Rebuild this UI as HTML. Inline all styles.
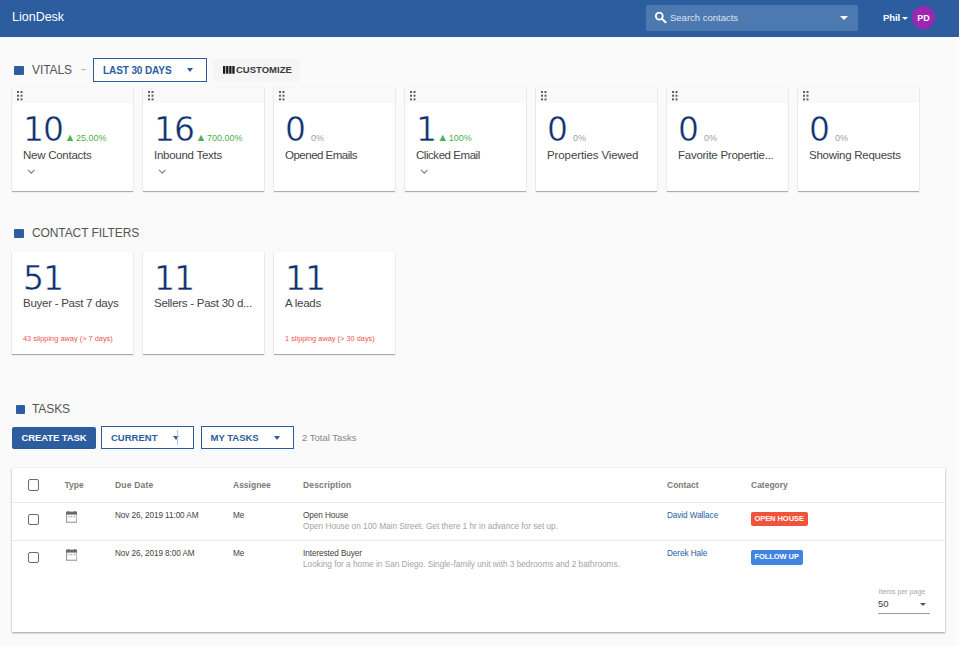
<!DOCTYPE html>
<html lang="en">
<head>
<meta charset="utf-8">
<title>LionDesk</title>
<style>
*{box-sizing:border-box;margin:0;padding:0}
html,body{width:960px;height:646px;overflow:hidden}
body{background:#fafafa;font-family:"Liberation Sans",sans-serif;color:#444;position:relative}
.abs{position:absolute}
#hdr{position:absolute;left:0;top:0;width:959px;height:37px;background:#2b5d9f}
#brand{position:absolute;left:12px;top:9px;font-size:12.5px;color:#fff;line-height:16px}
#search{position:absolute;left:646px;top:5px;width:212px;height:26px;background:#4d79b1;border-radius:2px}
#search .ph{position:absolute;left:24px;top:5.5px;font-size:9.5px;line-height:14px;color:#dbe5f1}
#user{position:absolute;left:883px;top:12px;font-size:9.5px;letter-spacing:-0.1px;font-weight:bold;color:#fff;line-height:12px}
#avatar{position:absolute;left:912px;top:6px;width:23px;height:23px;border-radius:50%;background:#9c27b0;color:#fff;font-size:9px;font-weight:bold;text-align:center;line-height:24px}
.sq{position:absolute;left:14px;width:9.5px;height:9.5px;background:#2b5d9f;border-radius:1px}
.h{position:absolute;left:32px;font-size:12px;line-height:16px;color:#555;letter-spacing:-0.1px}
.card{position:absolute;width:121px;height:104px;background:#fff;box-shadow:0 1px 1px rgba(0,0,0,.3),0 0 1px rgba(0,0,0,.09)}
.fc{height:102px}
.card .strip{position:absolute;left:0;top:0;width:100%;height:15.5px;background:#f9f9f9}
.card .num{position:absolute;left:11px;font-family:"DejaVu Sans",sans-serif;font-size:33px;line-height:36px;color:#10306e;letter-spacing:-1px;-webkit-text-stroke:0.5px #fff}
.card .lbl{position:absolute;left:11px;font-size:11.5px;line-height:14px;color:#444;white-space:nowrap;letter-spacing:-0.26px}
.card .pct{position:absolute;font-size:9px;line-height:10px;white-space:nowrap}
.tri{font-size:10.5px;line-height:0;margin-right:0.8px}
.g{color:#4caf50}.z{color:#9e9e9e}
.slip{position:absolute;left:11px;font-size:7.4px;line-height:9px;color:#ef5350;white-space:nowrap}
.btn{position:absolute;height:24px;font-size:10px;font-weight:bold;line-height:22px;white-space:nowrap}
.ol{border:1px solid #2b5d9f;color:#2b5d9f;background:#fff;padding-left:9px}
.car{position:absolute;width:0;height:0;border-left:3.5px solid transparent;border-right:3.5px solid transparent;border-top:4px solid #2b5d9f}
#tbl{position:absolute;left:12px;top:468px;width:932.6px;height:164px;background:#fff;box-shadow:0 1px 2px rgba(0,0,0,.36),0 0 1px rgba(0,0,0,.12)}
.th{position:absolute;font-size:8.5px;font-weight:bold;color:#7a7a7a;line-height:12px;white-space:nowrap}
.td{position:absolute;font-size:8.2px;color:#424242;line-height:10px;white-space:nowrap;letter-spacing:-0.07px}
.sub{color:#a4a4a4;font-size:8.25px;letter-spacing:0}
.lnk{color:#2b5d9f}
.cb{position:absolute;left:16.2px;width:11.2px;height:11.2px;border:1.3px solid #6b6b6b;border-radius:2px;background:#fff}
.hr{position:absolute;left:0;width:933px;height:1px;background:#eaeaea}
.tag{position:absolute;height:14.5px;border-radius:2px;color:#fff;font-size:7.5px;font-weight:bold;line-height:14.5px;padding:0 3.6px;white-space:nowrap;letter-spacing:-0.05px}
</style>
</head>
<body>
<div id="hdr">
  <div id="brand">LionDesk</div>
  <div id="search">
    <svg class="abs" style="left:9px;top:7px" width="12" height="12" viewBox="0 0 12 12"><circle cx="4.3" cy="4.1" r="3.45" fill="none" stroke="#fff" stroke-width="1.8"/><path d="M6.9 6.8 L10.6 10.3" stroke="#fff" stroke-width="2" stroke-linecap="round"/></svg>
    <div class="ph">Search contacts</div>
    <div class="car" style="left:194px;top:11px;border-top-color:#fff;border-left-width:4px;border-right-width:4px"></div>
  </div>
  <div id="user">Phil</div>
  <div class="car" style="left:902px;top:17px;border-top-color:#fff;border-left-width:3px;border-right-width:3px;border-top-width:3px"></div>
  <div id="avatar">PD</div>
</div>

<!-- VITALS -->
<div class="sq" style="top:65.5px"></div>
<div class="h" style="top:62px">VITALS</div>
<div class="abs" style="left:81px;top:61px;font-size:15px;color:#b0b0b0;line-height:16px">-</div>
<div class="btn ol" style="left:93px;top:58px;width:114px;height:23.5px;line-height:23.5px;letter-spacing:-0.1px">LAST 30 DAYS<div class="car" style="left:92.5px;top:9px"></div></div>
<div class="btn" style="left:213px;top:59px;width:87px;height:21.5px;background:#f5f5f5;color:#3a3a3a;border-radius:2px;padding-left:23px;line-height:22px;font-size:9.5px">CUSTOMIZE
  <svg class="abs" style="left:10px;top:7.2px" width="12" height="8" viewBox="0 0 12 8"><path d="M1.15 0V7.8M4.25 0V7.8M7.35 0V7.8M10.45 0V7.8" stroke="#1a1a1a" stroke-width="2.3"/></svg>
</div>

<div class="card" style="left:12px;top:87px"><div class="strip"></div><svg class="abs" style="left:4.5px;top:3.5px" width="6" height="10" viewBox="0 0 6 10"><g fill="#5e5e5e"><rect x="0" y="0" width="2" height="2"/><rect x="3.5" y="0" width="2" height="2"/><rect x="0" y="3.7" width="2" height="2"/><rect x="3.5" y="3.7" width="2" height="2"/><rect x="0" y="7.4" width="2" height="2"/><rect x="3.5" y="7.4" width="2" height="2"/></g></svg><div class="num" style="top:25px">10</div><div class="pct g" style="left:52.7px;top:46px"><span class="tri">&#9650;</span>25.00%</div><div class="lbl" style="top:61px">New Contacts</div><svg class="abs" style="left:14.5px;top:82px" width="8.5" height="5.6" viewBox="0 0 9 6"><path d="M1 1 L4.5 4.5 L8 1" fill="none" stroke="#7a7a7a" stroke-width="1.1"/></svg></div>
<div class="card" style="left:143px;top:87px"><div class="strip"></div><svg class="abs" style="left:4.5px;top:3.5px" width="6" height="10" viewBox="0 0 6 10"><g fill="#5e5e5e"><rect x="0" y="0" width="2" height="2"/><rect x="3.5" y="0" width="2" height="2"/><rect x="0" y="3.7" width="2" height="2"/><rect x="3.5" y="3.7" width="2" height="2"/><rect x="0" y="7.4" width="2" height="2"/><rect x="3.5" y="7.4" width="2" height="2"/></g></svg><div class="num" style="top:25px">16</div><div class="pct g" style="left:52.7px;top:46px"><span class="tri">&#9650;</span>700.00%</div><div class="lbl" style="top:61px">Inbound Texts</div><svg class="abs" style="left:14.5px;top:82px" width="8.5" height="5.6" viewBox="0 0 9 6"><path d="M1 1 L4.5 4.5 L8 1" fill="none" stroke="#7a7a7a" stroke-width="1.1"/></svg></div>
<div class="card" style="left:274px;top:87px"><div class="strip"></div><svg class="abs" style="left:4.5px;top:3.5px" width="6" height="10" viewBox="0 0 6 10"><g fill="#5e5e5e"><rect x="0" y="0" width="2" height="2"/><rect x="3.5" y="0" width="2" height="2"/><rect x="0" y="3.7" width="2" height="2"/><rect x="3.5" y="3.7" width="2" height="2"/><rect x="0" y="7.4" width="2" height="2"/><rect x="3.5" y="7.4" width="2" height="2"/></g></svg><div class="num" style="top:25px">0</div><div class="pct z" style="left:37px;top:46px">0%</div><div class="lbl" style="top:61px;letter-spacing:-0.5px">Opened Emails</div></div>
<div class="card" style="left:405px;top:87px"><div class="strip"></div><svg class="abs" style="left:4.5px;top:3.5px" width="6" height="10" viewBox="0 0 6 10"><g fill="#5e5e5e"><rect x="0" y="0" width="2" height="2"/><rect x="3.5" y="0" width="2" height="2"/><rect x="0" y="3.7" width="2" height="2"/><rect x="3.5" y="3.7" width="2" height="2"/><rect x="0" y="7.4" width="2" height="2"/><rect x="3.5" y="7.4" width="2" height="2"/></g></svg><div class="num" style="top:25px">1</div><div class="pct g" style="left:32.5px;top:46px"><span class="tri">&#9650;</span>100%</div><div class="lbl" style="top:61px;letter-spacing:-0.45px">Clicked Email</div><svg class="abs" style="left:14.5px;top:82px" width="8.5" height="5.6" viewBox="0 0 9 6"><path d="M1 1 L4.5 4.5 L8 1" fill="none" stroke="#7a7a7a" stroke-width="1.1"/></svg></div>
<div class="card" style="left:536px;top:87px"><div class="strip"></div><svg class="abs" style="left:4.5px;top:3.5px" width="6" height="10" viewBox="0 0 6 10"><g fill="#5e5e5e"><rect x="0" y="0" width="2" height="2"/><rect x="3.5" y="0" width="2" height="2"/><rect x="0" y="3.7" width="2" height="2"/><rect x="3.5" y="3.7" width="2" height="2"/><rect x="0" y="7.4" width="2" height="2"/><rect x="3.5" y="7.4" width="2" height="2"/></g></svg><div class="num" style="top:25px">0</div><div class="pct z" style="left:37px;top:46px">0%</div><div class="lbl" style="top:61px;letter-spacing:-0.1px">Properties Viewed</div></div>
<div class="card" style="left:667px;top:87px"><div class="strip"></div><svg class="abs" style="left:4.5px;top:3.5px" width="6" height="10" viewBox="0 0 6 10"><g fill="#5e5e5e"><rect x="0" y="0" width="2" height="2"/><rect x="3.5" y="0" width="2" height="2"/><rect x="0" y="3.7" width="2" height="2"/><rect x="3.5" y="3.7" width="2" height="2"/><rect x="0" y="7.4" width="2" height="2"/><rect x="3.5" y="7.4" width="2" height="2"/></g></svg><div class="num" style="top:25px">0</div><div class="pct z" style="left:37px;top:46px">0%</div><div class="lbl" style="top:61px">Favorite Propertie...</div></div>
<div class="card" style="left:798px;top:87px"><div class="strip"></div><svg class="abs" style="left:4.5px;top:3.5px" width="6" height="10" viewBox="0 0 6 10"><g fill="#5e5e5e"><rect x="0" y="0" width="2" height="2"/><rect x="3.5" y="0" width="2" height="2"/><rect x="0" y="3.7" width="2" height="2"/><rect x="3.5" y="3.7" width="2" height="2"/><rect x="0" y="7.4" width="2" height="2"/><rect x="3.5" y="7.4" width="2" height="2"/></g></svg><div class="num" style="top:25px">0</div><div class="pct z" style="left:37px;top:46px">0%</div><div class="lbl" style="top:61px">Showing Requests</div></div>
<div class="card fc" style="left:12px;top:252px"><div class="num" style="top:9px">51</div><div class="lbl" style="top:44px">Buyer - Past 7 days</div><div class="slip" style="top:81.5px">43 slipping away (&gt; 7 days)</div></div>
<div class="card fc" style="left:143px;top:252px"><div class="num" style="top:9px">11</div><div class="lbl" style="top:44px">Sellers - Past 30 d...</div></div>
<div class="card fc" style="left:274px;top:252px"><div class="num" style="top:9px">11</div><div class="lbl" style="top:44px">A leads</div><div class="slip" style="top:81.5px">1 slipping away (&gt; 30 days)</div></div>

<!-- CONTACT FILTERS -->
<div class="sq" style="top:228.5px"></div>
<div class="h" style="top:225px">CONTACT FILTERS</div>

<!-- TASKS -->
<div class="sq" style="top:404.5px;left:15.5px"></div>
<div class="h" style="top:400.5px">TASKS</div>
<div class="btn" style="left:12px;top:427px;width:84px;height:21.5px;background:#2b5d9f;color:#fff;border-radius:2px;text-align:center;line-height:21.5px;font-size:9.5px;letter-spacing:-0.1px">CREATE TASK</div>
<div class="btn ol" style="left:101px;top:426px;width:92.5px;height:23px;font-size:9.5px;line-height:22px">CURRENT<div class="car" style="left:70.5px;top:9px"></div><div class="abs" style="left:75px;top:3px;width:1px;height:15px;background:#b3c5df"></div></div>
<div class="btn ol" style="left:200.5px;top:426px;width:93px;height:23px;font-size:9.5px;line-height:22px">MY TASKS<div class="car" style="left:72px;top:9px"></div></div>
<div class="abs" style="left:302px;top:432px;font-size:9.5px;line-height:12px;color:#888">2 Total Tasks</div>

<div id="tbl">
  <div class="cb" style="top:11.4px"></div>
  <div class="th" style="left:52.5px;top:10.5px">Type</div>
  <div class="th" style="left:103px;top:10.5px;letter-spacing:0.2px">Due Date</div>
  <div class="th" style="left:221px;top:10.5px">Assignee</div>
  <div class="th" style="left:291px;top:10.5px;letter-spacing:0.15px">Description</div>
  <div class="th" style="left:655px;top:10.5px">Contact</div>
  <div class="th" style="left:739px;top:10.5px">Category</div>
  <div class="hr" style="top:34px"></div>

  <div class="cb" style="top:46px"></div>
  <svg class="abs" style="left:53.5px;top:43px" width="11.5" height="12" viewBox="0 0 11.5 12"><rect x="1.6" y="0" width="1.6" height="1.4" fill="#777"/><rect x="8" y="0" width="1.6" height="1.4" fill="#777"/><rect x="0.6" y="1.2" width="10.3" height="10" fill="#fff" stroke="#8c8c8c" stroke-width="1"/><rect x="0.1" y="0.8" width="11.3" height="2.8" fill="#6a6a6a"/><rect x="2.6" y="4.8" width="1" height="1.5" fill="#888"/><rect x="5.3" y="4.8" width="1" height="1.5" fill="#888"/><rect x="7.9" y="4.8" width="1" height="1.5" fill="#888"/></svg>
  <div class="td" style="left:103px;top:42.5px">Nov 26, 2019 11:00 AM</div>
  <div class="td" style="left:221px;top:42.5px">Me</div>
  <div class="td" style="left:291px;top:42.5px">Open House</div>
  <div class="td sub" style="left:291px;top:54px">Open House on 100 Main Street. Get there 1 hr in advance for set up.</div>
  <div class="td lnk" style="left:655px;top:42.5px">David Wallace</div>
  <div class="tag" style="left:738.8px;top:43.8px;background:#ef5339">OPEN HOUSE</div>
  <div class="hr" style="top:72px"></div>

  <div class="cb" style="top:84px"></div>
  <svg class="abs" style="left:53.5px;top:81px" width="11.5" height="12" viewBox="0 0 11.5 12"><rect x="1.6" y="0" width="1.6" height="1.4" fill="#777"/><rect x="8" y="0" width="1.6" height="1.4" fill="#777"/><rect x="0.6" y="1.2" width="10.3" height="10" fill="#fff" stroke="#8c8c8c" stroke-width="1"/><rect x="0.1" y="0.8" width="11.3" height="2.8" fill="#6a6a6a"/><rect x="2.6" y="4.8" width="1" height="1.5" fill="#888"/><rect x="5.3" y="4.8" width="1" height="1.5" fill="#888"/><rect x="7.9" y="4.8" width="1" height="1.5" fill="#888"/></svg>
  <div class="td" style="left:103px;top:80.5px">Nov 26, 2019 8:00 AM</div>
  <div class="td" style="left:221px;top:80.5px">Me</div>
  <div class="td" style="left:291px;top:80.5px">Interested Buyer</div>
  <div class="td sub" style="left:291px;top:92px">Looking for a home in San Diego. Single-family unit with 3 bedrooms and 2 bathrooms.</div>
  <div class="td lnk" style="left:655px;top:80.5px">Derek Hale</div>
  <div class="tag" style="left:738.8px;top:82px;background:#4285e0">FOLLOW UP</div>

  <div class="abs" style="left:866.5px;top:119.5px;font-size:7px;line-height:8px;color:#a8a8a8">Items per page</div>
  <div class="abs" style="left:866px;top:130px;font-size:9.5px;line-height:12px;color:#424242">50</div>
  <div class="car" style="left:908px;top:135px;border-top-color:#555;border-left-width:3px;border-right-width:3px;border-top-width:3px"></div>
  <div class="abs" style="left:866px;top:145px;width:52px;height:1px;background:#9a9a9a"></div>
</div>

<div class="abs" style="left:956px;top:37px;width:4px;height:609px;background:#fcfcfc"></div>
</body>
</html>
